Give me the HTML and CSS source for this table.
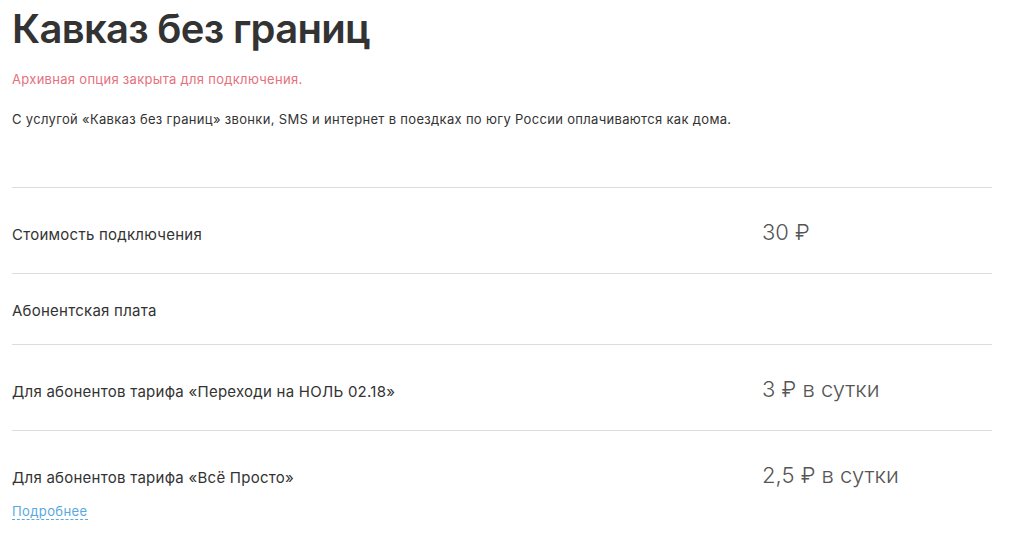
FILE: index.html
```html
<!DOCTYPE html>
<html lang="ru">
<head>
  <meta charset="UTF-8">
  <meta name="viewport" content="width=device-width, initial-scale=1.0">
  <title>Кавказ без границ</title>
  <link rel="stylesheet" href="styles.css">
</head>
<body>
  <div class="page">
    <h1>Кавказ без границ</h1>
    <p class="archive">Архивная опция закрыта для подключения.</p>
    <p class="lead">С услугой «Кавказ без границ» звонки, SMS и интернет в поездках по югу России оплачиваются как дома.</p>

    <!-- Условия опции -->
    <div class="prices">
      <div class="row">
        <div class="label">Стоимость подключения</div>
        <div class="value">30 ₽</div>
      </div>
      <div class="row">
        <div class="label">Абонентская плата</div>
      </div>
      <div class="row">
        <div class="label">Для абонентов тарифа «Переходи на НОЛЬ 02.18»</div>
        <div class="value">3 ₽ в сутки</div>
      </div>
      <div class="row last">
        <div class="label">
          Для абонентов тарифа «Всё Просто»
          <a class="more" href="#">Подробнее</a>
        </div>
        <div class="value">2,5 ₽ в сутки</div>
      </div>
    </div>
  </div>
</body>
</html>
```

FILE: styles.css
```css
body {
  font-family: Inter, "Open Sans", sans-serif;
  margin: 0;
  padding: 0;
  background-color: #ffffff;
  color: #333;
}
.page {
  padding: 0 28px 0 12px;
}
h1 {
  font-size: 40px;
  font-weight: 600;
  line-height: 58px;
  letter-spacing: -0.7px;
  margin: 0;
  color: #333;
}
.archive {
  color: #e5707e;
  font-size: 13px;
  line-height: 18px;
  letter-spacing: 0.3px;
  margin: 12px 0 0;
}
.lead {
  font-size: 13px;
  line-height: 18px;
  letter-spacing: 0.32px;
  margin: 22px 0 0;
}
.prices {
  margin-top: 59px;
}
.row {
  display: flex;
  align-items: baseline;
  border-top: 1px solid #dcdcdc;
  padding: 26px 0 23px;
}
.row.last {
  padding-bottom: 10px;
}
.label {
  flex: 1;
  font-size: 15px;
  line-height: 21px;
  letter-spacing: 0.25px;
}
.value {
  width: 230px;
  font-size: 22px;
  font-weight: 300;
  line-height: 36px;
  color: #555;
}
.more {
  display: table;
  margin-top: 15px;
  font-size: 13px;
  line-height: 16px;
  letter-spacing: 0.4px;
  color: #5aa8e0;
  text-decoration: none;
  border-bottom: 1px dashed #5aa8e0;
}
```
